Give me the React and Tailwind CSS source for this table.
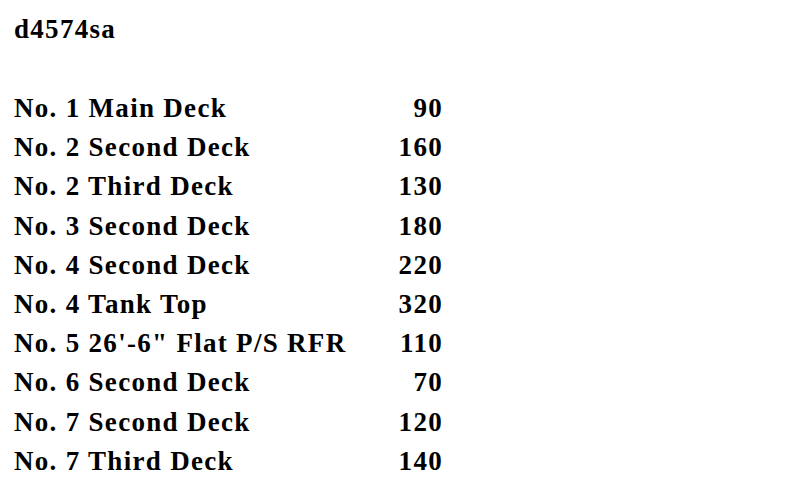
import React from "react";

const rows = [
  ["No. 1 Main Deck", "90"],
  ["No. 2 Second Deck", "160"],
  ["No. 2 Third Deck", "130"],
  ["No. 3 Second Deck", "180"],
  ["No. 4 Second Deck", "220"],
  ["No. 4 Tank Top", "320"],
  ["No. 5 26'-6\" Flat P/S RFR", "110"],
  ["No. 6 Second Deck", "70"],
  ["No. 7 Second Deck", "120"],
  ["No. 7 Third Deck", "140"],
];

export default function App() {
  return (
    <div className="w-[800px] h-[493px] bg-white text-black font-bold text-[27px] leading-[39.2px] tracking-[1.3px] font-['Liberation_Serif',serif] pl-[14px] pt-[10px] overflow-hidden">
      <div>d4574sa</div>
      <div className="h-[39.8px]" />
      <table className="border-collapse">
        <tbody>
          {rows.map(([name, value]) => (
            <tr key={name}>
              <td className="p-0 w-[360px] whitespace-nowrap">{name}</td>
              <td className="p-0 w-[69px] text-right">{value}</td>
            </tr>
          ))}
        </tbody>
      </table>
    </div>
  );
}
